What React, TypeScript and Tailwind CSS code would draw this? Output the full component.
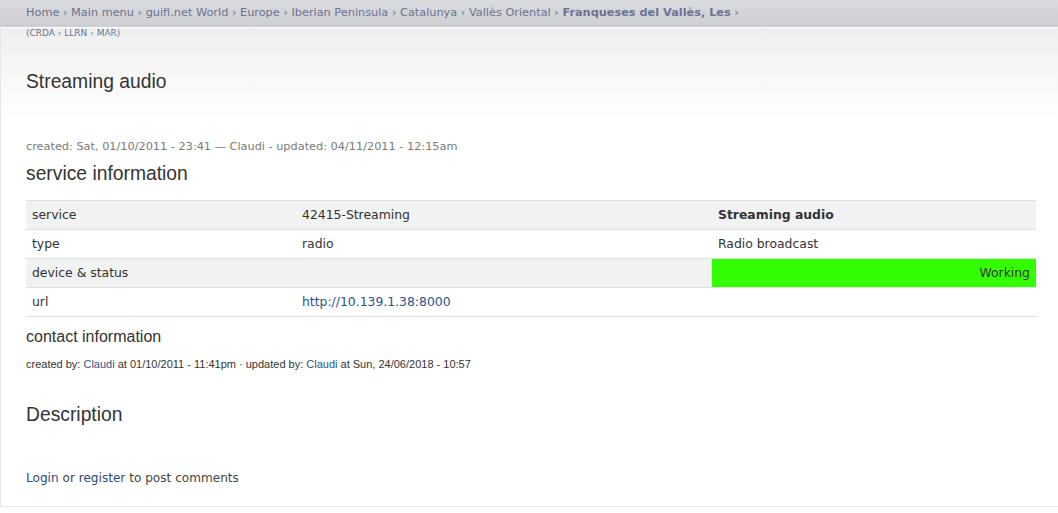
import React from 'react';

const crumbs = ['Home', 'Main menu', 'guifi.net World', 'Europe', 'Iberian Peninsula', 'Catalunya', 'Vallès Oriental'];

const rows = [
  { label: 'service', value: '42415-Streaming', extra: 'Streaming audio', bold: true },
  { label: 'type', value: 'radio', extra: 'Radio broadcast' },
  { label: 'device & status', value: '', extra: 'Working', status: true },
  { label: 'url', value: 'http://10.139.1.38:8000', extra: '', link: true },
];

const App: React.FC = () => {
  return (
    <div className="min-h-[513px] bg-white text-[#333]" style={{ fontFamily: '"DejaVu Sans", sans-serif' }}>
      {/* breadcrumb bar */}
      <div className="h-[28px] bg-gradient-to-b from-[#dadbdf] to-[#cdced2] border-b border-white px-[26px] leading-[25px] text-[11.3px] text-[#6b7392] whitespace-nowrap">
        {crumbs.map((c) => (
          <React.Fragment key={c}>
            {c}
            {' › '}
          </React.Fragment>
        ))}
        <b>Franqueses del Vallès, Les</b>
        {' ›'}
      </div>

      <div className="border-l border-[#e6e6e6]">
        <div className="bg-gradient-to-b from-[#efefef] to-white h-[92px] px-[25px]">
          <div className="text-[9px] text-[#6b7392] leading-none pt-[1px]">(CRDA › LLRN › MAR)</div>
          <h1 className="mt-[34px] text-[19.3px] leading-none text-[#333]" style={{ fontFamily: '"Liberation Sans", Arial, sans-serif' }}>
            Streaming audio
          </h1>
        </div>

        <div className="px-[25px]">
          <div className="mt-[21px] text-[11.3px] text-[#7a7a7a] leading-none">
            created: Sat, 01/10/2011 - 23:41 — Claudi - updated: 04/11/2011 - 12:15am
          </div>
          <h2 className="mt-[12px] text-[19.3px] leading-none" style={{ fontFamily: '"Liberation Sans", Arial, sans-serif' }}>
            service information
          </h2>

          <table className="mt-[16px] w-[1010px] border-collapse text-[12.4px] text-[#333]">
            <tbody>
              {rows.map((r, i) => (
                <tr key={r.label} className={`h-[29px] border-t border-b border-[#dfdfdf] ${i % 2 === 0 ? 'bg-[#f1f2f2]' : 'bg-white'}`}>
                  <td className="w-[270px] px-[6px] pt-[2px]">{r.label}</td>
                  <td className="w-[416px] px-[6px] pt-[2px]">
                    {r.link ? <span className="text-[#2b5486]">{r.value}</span> : r.value}
                  </td>
                  <td className={`px-[6px] pt-[2px] ${r.bold ? 'font-bold' : ''} ${r.status ? 'bg-[#33ff00] text-right' : ''}`}>{r.extra}</td>
                </tr>
              ))}
            </tbody>
          </table>

          <div style={{ fontFamily: '"Liberation Sans", Arial, sans-serif' }}>
            <h3 className="mt-[12px] text-[16px] leading-none">contact information</h3>
            <div className="mt-[14px] text-[11px] leading-none text-[#333]">
              created by: <span className="text-[#2b5486]">Claudi</span> at 01/10/2011 - 11:41pm · updated by:{' '}
              <span className="text-[#2b5486]">Claudi</span> at Sun, 24/06/2018 - 10:57
            </div>
            <h2 className="mt-[35px] text-[19.3px] leading-none">Description</h2>
          </div>

          <div className="mt-[48px] text-[12.1px] leading-none text-[#444]">
            <span className="text-[#2b4a7e]">Login</span> or <span className="text-[#2b4a7e]">register</span> to post comments
          </div>
        </div>
        <div className="mt-[22px] border-b border-[#e6e6e6]" />
      </div>
    </div>
  );
};

export default App;
